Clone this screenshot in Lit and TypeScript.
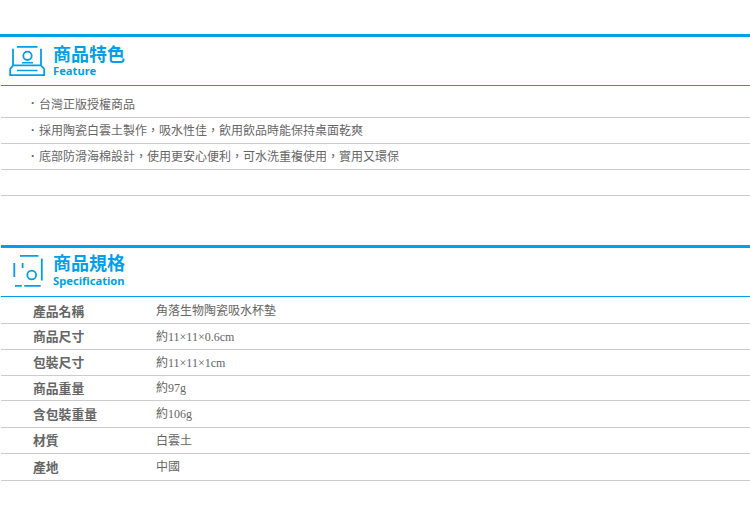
import { LitElement, html, css, svg } from "lit";
import { customElement } from "lit/decorators.js";

const FEATURES = [
  "台灣正版授權商品",
  "採用陶瓷白雲土製作，吸水性佳，飲用飲品時能保持桌面乾爽",
  "底部防滑海棉設計，使用更安心便利，可水洗重複使用，實用又環保",
  "",
];
const SPECS = [
  ["產品名稱", "角落生物陶瓷吸水杯墊"],
  ["商品尺寸", "約11×11×0.6cm"],
  ["包裝尺寸", "約11×11×1cm"],
  ["商品重量", "約97g"],
  ["含包裝重量", "約106g"],
  ["材質", "白雲土"],
  ["產地", "中國"],
];

const featureIcon = svg`<svg class="icon" width="40" height="33" viewBox="8 45 40 33" fill="none" stroke="#009fe8" stroke-width="1.8">
  <path d="M17 46.9H37.5M13 48.7V65.4M41 48.7V65.4"/>
  <circle cx="27.5" cy="55.8" r="4.2"/>
  <path d="M22 62.7H33M17 70.6H37.5" stroke-width="1.5"/>
  <path d="M13 65.4H41L44.2 69V75.2M13 65.4L10.2 69V75.2"/>
  <path d="M9.5 75.2H45"/>
</svg>`;
const specIcon = svg`<svg class="icon" width="32" height="34" viewBox="12 254 32 34" fill="none" stroke="#009fe8" stroke-width="1.8">
  <path d="M20 255.9H38.4M41.8 258.5V280.5M14.3 263V277M22.6 263V268"/>
  <circle cx="31.7" cy="275" r="4.4"/>
  <path d="M15 285.8H21.8M24.3 285.8H40.7"/>
</svg>`;

@customElement("app-root")
export class AppRoot extends LitElement {
  static styles = css`
    :host {
      display: block;
      width: 750px;
      height: 524px;
      background: #fff;
      overflow: hidden;
      font-family: "Liberation Serif", "Noto Sans CJK TC", serif;
      font-size: 12px;
      color: #666;
    }
    .section { display: flex; flex-direction: column; }
    .features { padding-top: 34px; }
    .specs { padding-top: 49px; padding-left: 1px; }
    .bar { height: 3px; background: #009fe8; }
    .head {
      display: flex;
      height: 49px;
      box-sizing: border-box;
      border-bottom: 1px solid #009fe8;
    }
    .features .head { margin-left: 1px; padding-left: 7px; gap: 5px; }
    .specs .head { padding-left: 11px; gap: 9px; }
    .features .icon { margin-top: 8px; }
    .specs .icon { margin-top: 6px; }
    .features .titles { margin-top: 6px; }
    .specs .titles { margin-top: 4px; }
    .titles { display: flex; flex-direction: column; }
    .cn {
      font-family: "Noto Sans CJK TC", sans-serif;
      font-size: 18px;
      font-weight: 700;
      line-height: 20px;
      color: #009fe8;
    }
    .en {
      font-family: "Noto Sans", sans-serif;
      font-size: 11.2px;
      font-weight: 700;
      line-height: 14px;
      margin-top: 2px;
      color: #009fe8;
    }
    .features .en { margin-top: 1px; }
    .list { margin-left: 1px; }
    .item {
      height: 26px;
      box-sizing: border-box;
      border-bottom: 1px solid #ccc;
      padding: 0 0 2px 30px;
      display: flex;
      align-items: center;
      font-family: "Noto Sans CJK TC", sans-serif;
      font-size: 12px;
    }
    .item:first-child { height: 32px; padding-top: 5px; }
    .dot {
      width: 8px;
      flex: none;
      font-family: "Liberation Sans", sans-serif;
      font-weight: 700;
    }
    .row {
      height: 26px;
      box-sizing: border-box;
      border-bottom: 1px solid #ccc;
      padding-bottom: 2px;
      display: flex;
      align-items: center;
    }
    .tall { height: 27px; }
    .short { height: 25px; }
    .lead { padding-bottom: 0; }
    .label {
      width: 155px;
      padding-left: 32px;
      box-sizing: border-box;
      flex: none;
      font-family: "Noto Sans CJK TC", sans-serif;
      font-size: 12.8px;
      font-weight: 700;
    }
    .value { font-family: "Liberation Serif", "Noto Sans CJK TC", serif; }
  `;

  private rowClass(i: number) {
    if (i === 0) return "row tall lead";
    return i === 4 || i === 6 ? "row tall" : i === 3 ? "row short" : "row";
  }

  render() {
    return html`
      <section class="section features">
        <div class="bar"></div>
        <div class="head">
          ${featureIcon}
          <div class="titles"><span class="cn">商品特色</span><span class="en">Feature</span></div>
        </div>
        <div class="list">
          ${FEATURES.map((f) => html`<div class="item">${f ? html`<span class="dot">·</span><span>${f}</span>` : ""}</div>`)}
        </div>
      </section>
      <section class="section specs">
        <div class="bar"></div>
        <div class="head">
          ${specIcon}
          <div class="titles"><span class="cn">商品規格</span><span class="en">Specification</span></div>
        </div>
        ${SPECS.map(([k, v], i) => html`<div class=${this.rowClass(i)}><span class="label">${k}</span><span class="value">${v}</span></div>`)}
      </section>
    `;
  }
}
